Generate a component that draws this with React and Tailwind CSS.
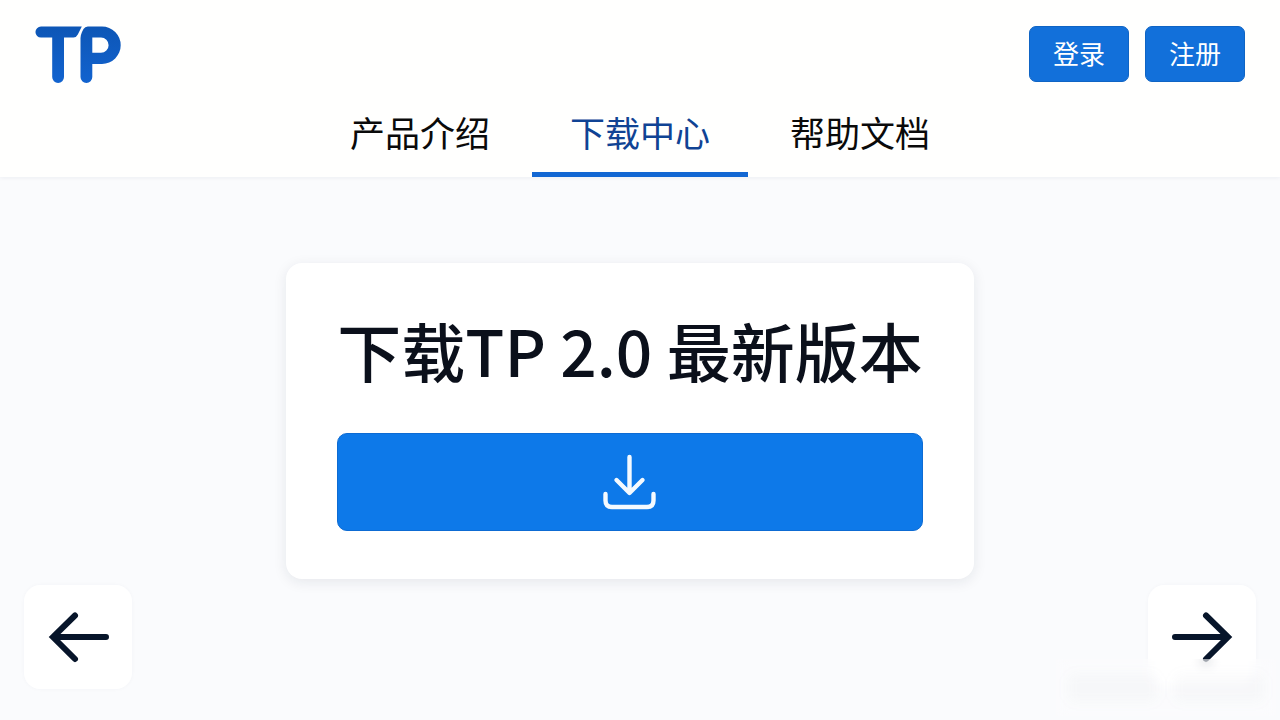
const tabs = [
  { label: "产品介绍", active: false },
  { label: "下载中心", active: true },
  { label: "帮助文档", active: false },
];

function Logo() {
  return (
    <svg viewBox="-1 0 86 57" className="h-[57px] w-[86px] overflow-visible" role="img" aria-label="TP">
      <defs>
        <linearGradient id="logoFill" x1="0" y1="0" x2="0" y2="1">
          <stop offset="0" stopColor="#0d56b6" />
          <stop offset="1" stopColor="#1263cf" />
        </linearGradient>
      </defs>
      <path
        fill="url(#logoFill)"
        d="M5 0.500H45.800L41.800 8.500Q40.300 11.600 37.500 11.600H28V51A5.900 5.900 0 0 1 16.200 51V11.600H5A5.550 5.550 0 0 1 5 0.500Z"
      />
      <path
        fill="url(#logoFill)"
        fillRule="evenodd"
        d="M51.800 0.500H66A18.700 18.700 0 0 1 66 37.900H56.300V51A5.900 5.900 0 0 1 44.500 51V12Q44.600 9 46 6L47.500 3Q49 0.500 51.800 0.500ZM56.300 11.600V26.800H65A7.600 7.600 0 0 0 65 11.600Z"
      />
    </svg>
  );
}

function AuthButton({ children }) {
  return (
    <button
      type="button"
      className="flex h-14 w-[100px] items-center justify-center rounded-[7px] border border-[#0f64c4] bg-[#1270da] pb-0.5 text-[26px] leading-8 text-white"
    >
      {children}
    </button>
  );
}

function ArrowButton({ label, children }) {
  return (
    <button
      type="button"
      aria-label={label}
      className="flex h-[104px] w-[108px] items-center justify-center rounded-2xl bg-white shadow-[0_0_4px_rgba(30,50,80,0.03)]"
    >
      <svg
        viewBox="0 0 60 52"
        className="h-[52px] w-[60px] overflow-visible"
        fill="none"
        stroke="#07152a"
        strokeWidth="6"
        strokeLinecap="round"
        strokeLinejoin="miter"
        aria-hidden="true"
      >
        {children}
      </svg>
    </button>
  );
}

export default function App() {
  return (
    <div className="relative flex min-h-screen flex-col overflow-hidden bg-[#fafbfd] font-['Noto_Sans_CJK_SC',sans-serif]">
      <header className="bg-[#fffffe] px-[35px] pt-[26px] shadow-[0_1px_4px_rgba(20,30,60,0.06)]">
        <div className="flex items-start justify-between">
          <a href="#home" aria-label="TP">
            <Logo />
          </a>
          <div className="flex gap-4">
            <AuthButton>登录</AuthButton>
            <AuthButton>注册</AuthButton>
          </div>
        </div>
        <nav className="flex justify-center gap-1 pt-[25px]">
          {tabs.map((tab) => (
            <a
              key={tab.label}
              href="#tab"
              aria-current={tab.active ? "page" : undefined}
              className={
                tab.active
                  ? "border-b-[5px] border-[#1267d3] px-[38px] pb-4 text-[35px] leading-[48px] text-[#104394]"
                  : "border-b-[5px] border-transparent px-[38px] pb-4 text-[35px] leading-[48px] text-[#0a0a0a]"
              }
            >
              {tab.label}
            </a>
          ))}
        </nav>
      </header>

      <main className="flex flex-1 flex-col">
        <div className="flex justify-center pt-[86px] pr-5">
          <section className="rounded-2xl bg-white px-[51px] pt-[46px] pb-12 shadow-[0_3px_14px_rgba(20,30,60,0.09)]">
            <h1 className="text-center text-[64px] leading-[80px] font-medium whitespace-nowrap text-[#0b101b]">
              下载TP 2.0 最新版本
            </h1>
            <button
              type="button"
              aria-label="下载"
              className="mt-11 flex h-[98px] w-full items-center justify-center rounded-[10px] border border-[#0d6bd3] bg-[#0d79e9]"
            >
              <svg
                viewBox="0 0 54 56"
                className="h-14 w-[54px]"
                fill="none"
                stroke="#f4faff"
                strokeWidth="4.4"
                strokeLinecap="round"
                strokeLinejoin="round"
                aria-hidden="true"
              >
                <path d="M26.500 3V38M13.500 26L26.500 39L39.500 26M2.500 40V46.500Q2.500 53 9 53H44Q50.500 53 50.500 46.500V40" />
              </svg>
            </button>
          </section>
        </div>

        <div className="mt-auto flex justify-between px-6 pt-1 pb-[31px]">
          <ArrowButton label="上一页">
            <path d="M58 26H8M27 4.500L5 26L27 48" />
          </ArrowButton>
          <ArrowButton label="下一页">
            <path d="M3 26H54M34 4.500L56 26L34 48" />
          </ArrowButton>
        </div>
      </main>

      <div
        aria-hidden="true"
        className="pointer-events-none absolute right-1 bottom-1 flex h-[57px] w-[220px] items-center gap-4 overflow-hidden bg-white/20 px-3 backdrop-blur-[6px]"
      >
        <div className="h-7 flex-1 rounded-lg bg-[#7d8590]/4 blur-[6px]" />
        <div className="h-7 flex-1 rounded-lg bg-[#7d8590]/4 blur-[6px]" />
      </div>
    </div>
  );
}
